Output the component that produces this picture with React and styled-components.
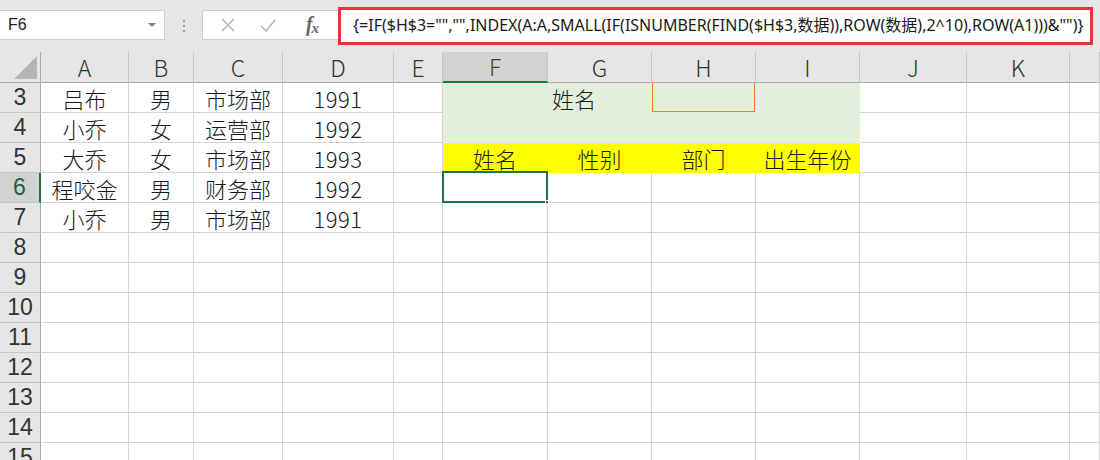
import React from "react";
import styled, { createGlobalStyle } from "styled-components";

const GlobalStyle = createGlobalStyle`
  html, body { margin: 0; padding: 0; }
  body {
    width: 1100px;
    height: 460px;
    overflow: hidden;
    background: #e6e6e6;
    font-family: "Liberation Sans", "Noto Sans CJK SC", sans-serif;
  }
`;

const LIGHT = '"Noto Sans CJK SC", "Noto Sans CJK JP", sans-serif';

const Window = styled.div`
  width: 1100px;
  height: 460px;
  overflow: hidden;
  background: #ffffff;
`;

const FormulaBar = styled.div`
  height: 52px;
  background: #e6e6e6;
  display: flex;
  align-items: flex-start;
  box-sizing: border-box;
`;

const NameBox = styled.div`
  margin-top: 10px;
  width: 165px;
  height: 30px;
  box-sizing: border-box;
  background: #fff;
  border: 1px solid #d0d0d0;
  border-left: none;
  display: flex;
  align-items: center;
  justify-content: space-between;
  padding: 0 8px 0 8px;
  font-size: 16px;
  color: #222;
`;

const Caret = styled.span`
  width: 0;
  height: 0;
  border-left: 4px solid transparent;
  border-right: 4px solid transparent;
  border-top: 4px solid #7a7a7a;
`;

const Grip = styled.div`
  width: 37px;
  height: 52px;
  display: flex;
  flex-direction: column;
  align-items: center;
  justify-content: center;
  gap: 3px;
  span {
    width: 2px;
    height: 2px;
    background: #9a9a9a;
  }
`;

const FuncBox = styled.div`
  margin-top: 10px;
  width: 140px;
  height: 30px;
  box-sizing: border-box;
  background: #fff;
  border: 1px solid #d0d0d0;
  display: flex;
  align-items: center;
  padding-left: 16px;
`;

const FuncIcon = styled.span`
  width: ${(p) => p.$w}px;
  margin-left: ${(p) => p.$ml || 0}px;
  display: flex;
  align-items: center;
  justify-content: center;
`;

const Fx = styled.span`
  font-family: "Liberation Serif", "DejaVu Serif", serif;
  font-style: italic;
  font-weight: bold;
  color: #666;
  font-size: 20px;
  letter-spacing: -1px;
  line-height: 1;
  sub {
    font-size: 15px;
    vertical-align: -2px;
  }
`;

const FormulaField = styled.div`
  margin-top: 7px;
  margin-left: -4px;
  width: 755px;
  height: 38px;
  box-sizing: border-box;
  border: 3px solid #e5343d;
  background: #fff;
  display: flex;
  align-items: center;
  padding-left: 12px;
  font-family: "Noto Sans", "Noto Sans CJK SC", sans-serif;
  font-size: 16px;
  line-height: 1.2;
  color: #1a1a1a;
  white-space: nowrap;
  overflow: hidden;
`;

const Sheet = styled.div`
  display: grid;
  grid-template-columns: 41px 88px 65px 89px 111px 49px 105px 104px 104px 104px 107px 103px 1fr;
  grid-template-rows: 31px repeat(13, 30px);
  font-size: 22px;
  line-height: 1;
  color: #1a1a1a;
`;

const Corner = styled.div`
  background: #e6e6e6;
  border-right: 1px solid #ababab;
  border-bottom: 1px solid #ababab;
  display: flex;
  align-items: flex-end;
  justify-content: flex-end;
  padding: 0 3px 3px 0;
`;

const ColHead = styled.div`
  background: ${(p) => (p.$active ? "#d2d2d2" : "#e6e6e6")};
  border-right: 1px solid #c6c6c6;
  border-bottom: ${(p) => (p.$active ? "2px solid #217346" : "1px solid #ababab")};
  display: flex;
  align-items: center;
  justify-content: center;
  font-family: ${LIGHT};
  font-weight: 300;
  font-size: 23px;
  line-height: 1;
  color: ${(p) => (p.$active ? "#2f4f3b" : "#333")};
`;

const RowHead = styled.div`
  background: ${(p) => (p.$active ? "#d2d2d2" : "#e6e6e6")};
  border-right: ${(p) => (p.$active ? "2px solid #217346" : "1px solid #ababab")};
  border-bottom: 1px solid #c6c6c6;
  display: flex;
  align-items: center;
  justify-content: center;
  font-family: "Liberation Sans", sans-serif;
  font-size: 23px;
  line-height: 1;
  color: ${(p) => (p.$active ? "#2f5a40" : "#333")};
`;

const Cell = styled.div`
  position: relative;
  background: ${(p) => p.$bg || "#fff"};
  border-right: 1px solid ${(p) => p.$bg || "#d4d4d4"};
  border-bottom: 1px solid ${(p) => p.$bg || "#d4d4d4"};
  display: flex;
  align-items: center;
  justify-content: ${(p) => (p.$left ? "flex-start" : "center")};
  padding-left: ${(p) => (p.$left ? "4px" : "0")};
  font-family: ${LIGHT};
  font-weight: 300;
  font-size: 22px;
  letter-spacing: ${(p) => (p.$num ? "0.5px" : "0")};
  line-height: 1;
  white-space: nowrap;
  box-shadow: ${(p) =>
    p.$marked
      ? "inset 1px 0 #ed7d31, inset -1px 0 #ed7d31, inset 0 -1px #ed7d31"
      : "none"};
`;

const Selection = styled.div`
  position: absolute;
  top: -2px;
  left: -1px;
  right: -1px;
  bottom: -1px;
  border: 2px solid #217346;
  pointer-events: none;
`;

const Handle = styled.div`
  position: absolute;
  right: -5px;
  bottom: -5px;
  width: 5px;
  height: 5px;
  background: #217346;
  border: 1px solid #fff;
`;

const columns = ["A", "B", "C", "D", "E", "F", "G", "H", "I", "J", "K", ""];

const data = {
  3: ["吕布", "男", "市场部", "1991"],
  4: ["小乔", "女", "运营部", "1992"],
  5: ["大乔", "女", "市场部", "1993"],
  6: ["程咬金", "男", "财务部", "1992"],
  7: ["小乔", "男", "市场部", "1991"],
};

const GREEN = "#e2efda";
const YELLOW = "#ffff00";
const yellowHeads = ["姓名", "性别", "部门", "出生年份"];

function renderCell(row, ci) {
  const key = `${row}-${ci}`;
  const vals = data[row];
  if (ci <= 3 && vals) {
    return (
      <Cell key={key} $num={ci === 3}>
        {vals[ci]}
      </Cell>
    );
  }
  if ((row === 3 || row === 4) && ci >= 5 && ci <= 8) {
    if (row === 3 && ci === 6) {
      return (
        <Cell key={key} $bg={GREEN} $left>
          姓名
        </Cell>
      );
    }
    if (row === 3 && ci === 7) {
      return <Cell key={key} $bg={GREEN} $marked />;
    }
    return <Cell key={key} $bg={GREEN} />;
  }
  if (row === 5 && ci >= 5 && ci <= 8) {
    return (
      <Cell key={key} $bg={YELLOW}>
        {yellowHeads[ci - 5]}
      </Cell>
    );
  }
  if (row === 6 && ci === 5) {
    return (
      <Cell key={key}>
        <Selection />
        <Handle />
      </Cell>
    );
  }
  return <Cell key={key} />;
}

export default function App() {
  const rows = [];
  for (let r = 3; r <= 15; r++) rows.push(r);
  return (
    <>
      <GlobalStyle />
      <Window>
        <FormulaBar>
          <NameBox>
            <span>F6</span>
            <Caret />
          </NameBox>
          <Grip>
            <span />
            <span />
            <span />
          </Grip>
          <FuncBox>
            <FuncIcon $w={18}>
              <svg width="16" height="16" viewBox="0 0 16 16">
                <path d="M2 2 L14 14 M14 2 L2 14" stroke="#b8b8b8" strokeWidth="1.6" fill="none" />
              </svg>
            </FuncIcon>
            <FuncIcon $w={22} $ml={20}>
              <svg width="18" height="16" viewBox="0 0 18 16">
                <path d="M2 9 L7 14 L16 3" stroke="#b8b8b8" strokeWidth="1.6" fill="none" />
              </svg>
            </FuncIcon>
            <FuncIcon $w={26} $ml={20}>
              <Fx>
                f<sub>x</sub>
              </Fx>
            </FuncIcon>
          </FuncBox>
          <FormulaField>
            {'{=IF($H$3="","",INDEX(A:A,SMALL(IF(ISNUMBER(FIND($H$3,数据)),ROW(数据),2^10),ROW(A1)))&"")}'}
          </FormulaField>
        </FormulaBar>
        <Sheet>
          <Corner>
            <svg width="23" height="23" viewBox="0 0 23 23">
              <polygon points="23,0 23,23 0,23" fill="#b5b5b5" />
            </svg>
          </Corner>
          {columns.map((c) => (
            <ColHead key={c || "rest"} $active={c === "F"}>
              {c}
            </ColHead>
          ))}
          {rows.map((r) => (
            <React.Fragment key={r}>
              <RowHead $active={r === 6}>{r}</RowHead>
              {columns.map((_, ci) => renderCell(r, ci))}
            </React.Fragment>
          ))}
        </Sheet>
      </Window>
    </>
  );
}
